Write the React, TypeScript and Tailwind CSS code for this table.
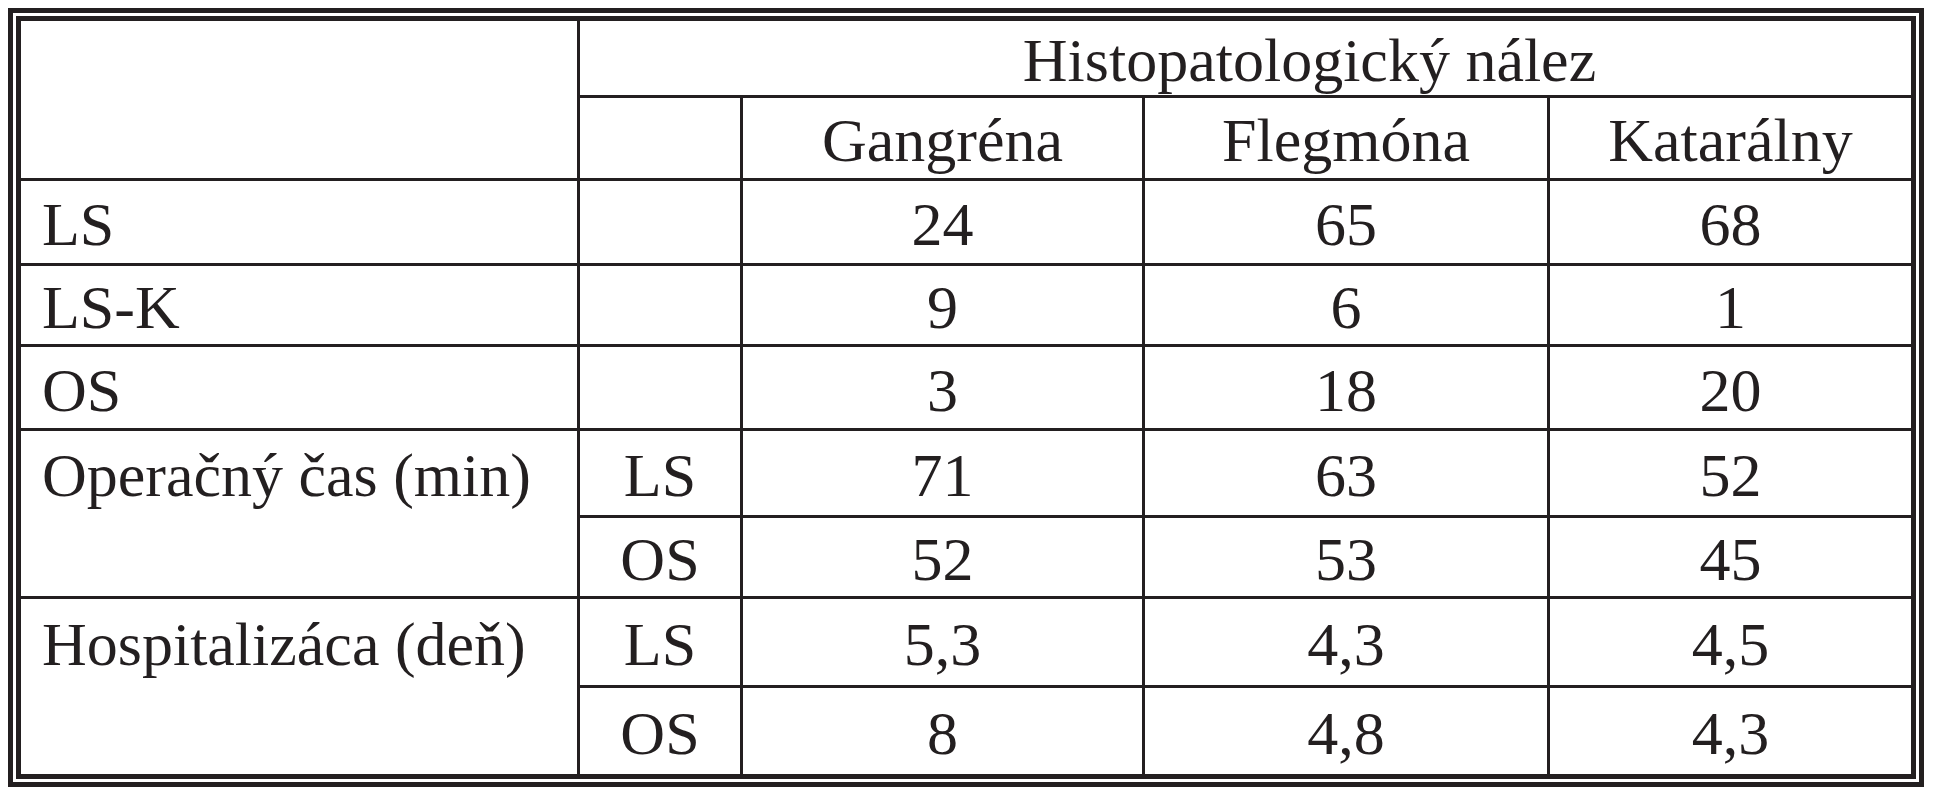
import React from "react";

const font = { fontFamily: '"Liberation Serif", "Times New Roman", serif' };

function Cell({
  children,
  className = "",
}: {
  children?: React.ReactNode;
  className?: string;
}) {
  return (
    <div className={`bg-white flex items-center pt-[4px] ${className}`}>
      {children}
    </div>
  );
}

export default function App() {
  const data: [string, string, string, string, string][] = [];
  void data;
  return (
    <div className="w-[1933px] h-[800px] bg-white p-[8px]" style={font}>
      <div className="w-[1916px] border-[5px] border-[#231f20] p-[3px] bg-white">
        <div
          className="border-[5px] border-[#231f20] bg-[#231f20] grid gap-[3px] text-[62px] leading-none text-[#231f20]"
          style={{
            gridTemplateColumns: "556px 160px 399px 402px 361px",
            gridTemplateRows: "74px 80px 82px 78px 81px 84px 78px 86px 86px",
          }}
        >
          {/* header */}
          <Cell className="row-span-2 col-start-1 row-start-1" />
          <Cell className="col-start-2 col-span-4 row-start-1 justify-center pl-[128px]">
            Histopatologický nález
          </Cell>
          <Cell className="col-start-2 row-start-2" />
          <Cell className="col-start-3 row-start-2 justify-center">Gangréna</Cell>
          <Cell className="col-start-4 row-start-2 justify-center">Flegmóna</Cell>
          <Cell className="col-start-5 row-start-2 justify-center">Katarálny</Cell>

          {/* LS */}
          <Cell className="col-start-1 row-start-3 pl-[21px]">LS</Cell>
          <Cell className="col-start-2 row-start-3" />
          <Cell className="col-start-3 row-start-3 justify-center">24</Cell>
          <Cell className="col-start-4 row-start-3 justify-center">65</Cell>
          <Cell className="col-start-5 row-start-3 justify-center">68</Cell>

          {/* LS-K */}
          <Cell className="col-start-1 row-start-4 pl-[21px]">LS-K</Cell>
          <Cell className="col-start-2 row-start-4" />
          <Cell className="col-start-3 row-start-4 justify-center">9</Cell>
          <Cell className="col-start-4 row-start-4 justify-center">6</Cell>
          <Cell className="col-start-5 row-start-4 justify-center">1</Cell>

          {/* OS */}
          <Cell className="col-start-1 row-start-5 pl-[21px]">OS</Cell>
          <Cell className="col-start-2 row-start-5" />
          <Cell className="col-start-3 row-start-5 justify-center">3</Cell>
          <Cell className="col-start-4 row-start-5 justify-center">18</Cell>
          <Cell className="col-start-5 row-start-5 justify-center">20</Cell>

          {/* Operačný čas */}
          <div className="bg-white col-start-1 row-start-6 row-span-2 pl-[21px]">
            <div className="h-[84px] flex items-center pt-[4px]">
              Operačný čas (min)
            </div>
          </div>
          <Cell className="col-start-2 row-start-6 justify-center">LS</Cell>
          <Cell className="col-start-3 row-start-6 justify-center">71</Cell>
          <Cell className="col-start-4 row-start-6 justify-center">63</Cell>
          <Cell className="col-start-5 row-start-6 justify-center">52</Cell>
          <Cell className="col-start-2 row-start-7 justify-center">OS</Cell>
          <Cell className="col-start-3 row-start-7 justify-center">52</Cell>
          <Cell className="col-start-4 row-start-7 justify-center">53</Cell>
          <Cell className="col-start-5 row-start-7 justify-center">45</Cell>

          {/* Hospitalizáca */}
          <div className="bg-white col-start-1 row-start-8 row-span-2 pl-[21px]">
            <div className="h-[86px] flex items-center pt-[4px]">
              Hospitalizáca (deň)
            </div>
          </div>
          <Cell className="col-start-2 row-start-8 justify-center">LS</Cell>
          <Cell className="col-start-3 row-start-8 justify-center">5,3</Cell>
          <Cell className="col-start-4 row-start-8 justify-center">4,3</Cell>
          <Cell className="col-start-5 row-start-8 justify-center">4,5</Cell>
          <Cell className="col-start-2 row-start-9 justify-center">OS</Cell>
          <Cell className="col-start-3 row-start-9 justify-center">8</Cell>
          <Cell className="col-start-4 row-start-9 justify-center">4,8</Cell>
          <Cell className="col-start-5 row-start-9 justify-center">4,3</Cell>
        </div>
      </div>
    </div>
  );
}
